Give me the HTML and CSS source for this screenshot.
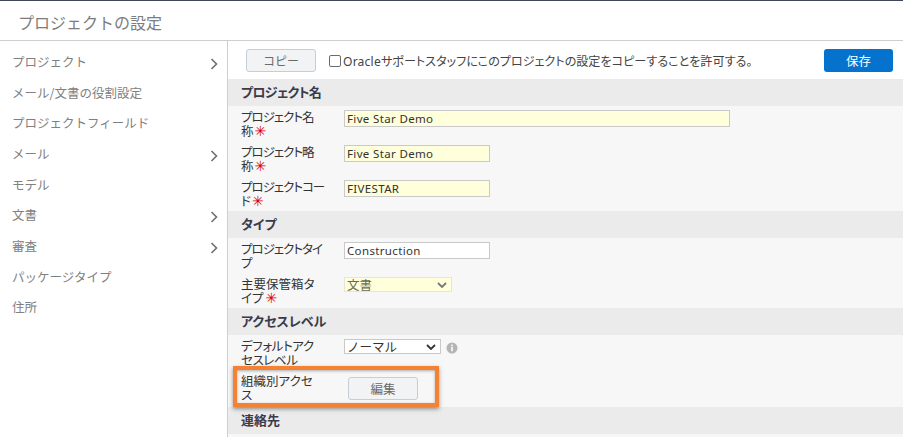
FILE: index.html
```html
<!DOCTYPE html>
<html lang="ja">
<head>
<meta charset="utf-8">
<title>プロジェクトの設定</title>
<link rel="stylesheet" href="styles.css">
</head>
<body>
<div class="page">
  <header class="title">プロジェクトの設定</header>
  <div class="columns">
    <nav class="side">
      <a class="nav-item">プロジェクト<svg class="chev" viewBox="0 0 8 12"><path d="M1.5 1l5 5-5 5"/></svg></a>
      <a class="nav-item">メール/文書の役割設定</a>
      <a class="nav-item">プロジェクトフィールド</a>
      <a class="nav-item">メール<svg class="chev" viewBox="0 0 8 12"><path d="M1.5 1l5 5-5 5"/></svg></a>
      <a class="nav-item">モデル</a>
      <a class="nav-item">文書<svg class="chev" viewBox="0 0 8 12"><path d="M1.5 1l5 5-5 5"/></svg></a>
      <a class="nav-item">審査<svg class="chev" viewBox="0 0 8 12"><path d="M1.5 1l5 5-5 5"/></svg></a>
      <a class="nav-item">パッケージタイプ</a>
      <a class="nav-item">住所</a>
    </nav>
    <main class="main">
      <div class="toolbar">
        <button class="btn btn-copy">コピー</button>
        <span class="box"></span>
        <span class="allow"><span class="latin">Oracle</span>サポートスタッフにこのプロジェクトの設定をコピーすることを許可する。</span>
        <button class="btn-save">保存</button>
      </div>

      <h2 class="sec sec-tight">プロジェクト名</h2>
      <div class="rows">
        <div class="row r35">
          <div class="lbl tight">プロジェクト名<br>称<span class="req">✳</span></div>
          <div class="field long req-bg">Five Star Demo</div>
        </div>
        <div class="row r35">
          <div class="lbl tight">プロジェクト略<br>称<span class="req">✳</span></div>
          <div class="field req-bg">Five Star Demo</div>
        </div>
        <div class="row r35">
          <div class="lbl tight">プロジェクトコー<br>ド<span class="req">✳</span></div>
          <div class="field req-bg">FIVESTAR</div>
        </div>
      </div>

      <h2 class="sec">タイプ</h2>
      <div class="rows">
        <div class="row r35">
          <div class="lbl tight">プロジェクトタイ<br>プ</div>
          <div class="field white">Construction</div>
        </div>
        <div class="row r35">
          <div class="lbl">主要保管箱タ<br>イプ<span class="req">✳</span></div>
          <div class="sel sel-req">文書<svg class="caret light" viewBox="0 0 10 6"><path d="M1 1l4 4 4-4"/></svg></div>
        </div>
      </div>

      <h2 class="sec">アクセスレベル</h2>
      <div class="rows">
        <div class="row r31">
          <div class="lbl snug">デフォルトアク<br>セスレベル</div>
          <div class="sel sel-white">ノーマル<svg class="caret" viewBox="0 0 10 6"><path d="M1 1l4 4 4-4"/></svg></div>
          <svg class="info" viewBox="0 0 12 12"><circle cx="6" cy="6" r="5.5"/><rect x="5.2" y="5" width="1.6" height="4.2"/><rect x="5.2" y="2.6" width="1.6" height="1.6"/></svg>
        </div>
        <div class="row r41">
          <div class="lbl">組織別アクセ<br>ス</div>
          <button class="btn btn-edit">編集</button>
          <div class="callout"></div>
        </div>
      </div>

      <h2 class="sec">連絡先</h2>
      <div class="rows rest"></div>
    </main>
  </div>
</div>
</body>
</html>
```
FILE: styles.css
```css
* { box-sizing: border-box; }
html, body { margin: 0; height: 100%; }
body {
  font-family: "Noto Sans CJK JP", "Noto Sans", sans-serif;
  background: #fff;
  overflow: hidden;
}
.page {
  width: 903px;
  height: 437px;
  display: flex;
  flex-direction: column;
  border-top: 1px solid #3d4757;
  overflow: hidden;
}
.title {
  height: 40px;
  padding-left: 18px;
  font-size: 16px;
  line-height: 42px;
  color: #7d7d7d;
  border-bottom: 1px solid #cfcfcf;
  flex: none;
}
.columns { display: flex; flex: 1; min-height: 0; }
.side {
  width: 228px;
  flex: none;
  padding-top: 5px;
  border-right: 1px solid #cfcfcf;
  display: grid;
  grid-auto-rows: 30.7px;
  align-content: start;
}
.nav-item {
  display: flex;
  align-items: center;
  justify-content: space-between;
  padding: 0 9px 0 12px;
  font-size: 12.5px;
  color: #808080;
}
.chev { width: 8px; height: 12px; margin-top: 5px; }
.chev path { fill: none; stroke: #6f6f6f; stroke-width: 1.6; }
.main { flex: 1; min-width: 0; }
.toolbar {
  height: 38px;
  display: flex;
  align-items: center;
  padding: 1px 10px 0 18px;
}
.btn {
  font-family: inherit;
  font-size: 12px;
  color: #6a6a6a;
  background: #f2f3f5;
  border: 1px solid #c4cdd8;
  border-radius: 3px;
  padding: 0;
  width: 70px;
  height: 23px;
  line-height: 19px;
}
.btn-copy { margin-right: 13px; }
.box {
  width: 12px;
  height: 12px;
  border: 1px solid #6b6b6b;
  border-radius: 2px;
  background: #fff;
  margin-right: 2px;
  flex: none;
}
.allow {
  font-size: 12.1px;
  font-feature-settings: "palt";
  color: #444;
  white-space: nowrap;
  flex: 1;
}
.latin { font-family: "Noto Sans", sans-serif; letter-spacing: 0.2px; }
.btn-save {
  font-family: inherit;
  font-size: 12.5px;
  width: 69px;
  height: 23px;
  padding: 0;
  border: 0;
  border-radius: 3px;
  background: #0572ce;
  color: #fff;
  flex: none;
}
.sec {
  margin: 0;
  height: 27px;
  padding-left: 13px;
  font-size: 13px;
  font-weight: 700;
  font-feature-settings: "palt";
  line-height: 25px;
  color: #3a3a4a;
  background: #ebebeb;
}
.sec-tight { letter-spacing: -0.7px; }
.rows { background: #f7f7f7; }
.row {
  position: relative;
  display: flex;
  align-items: flex-start;
  padding-left: 13px;
}
.r35 { height: 35px; padding-top: 4px; }
.r31 { height: 31px; padding-top: 4px; }
.r41 { height: 41px; padding-top: 8px; }
.lbl {
  width: 103px;
  flex: none;
  font-size: 12.5px;
  font-feature-settings: "palt";
  line-height: 14px;
  color: #333;
  white-space: nowrap;
}
.tight { letter-spacing: -1px; }
.snug { letter-spacing: -0.4px; }
.req {
  font-family: "DejaVu Sans", sans-serif;
  color: #d90000;
  font-size: 14px;
  line-height: 10px;
  margin-left: 2px;
  letter-spacing: 0;
}
.field {
  width: 146px;
  height: 17px;
  border: 1px solid #c9c9c9;
  padding-left: 2px;
  font-family: "Noto Sans", sans-serif;
  font-size: 11.5px;
  letter-spacing: 0.35px;
  line-height: 16px;
  color: #333;
}
.long { width: 386px; }
.req-bg { background: #ffffdc; }
.white { background: #fff; }
.sel {
  display: flex;
  align-items: center;
  justify-content: space-between;
  height: 15px;
  padding: 0 4px 0 2px;
  font-size: 12.5px;
  border: 1px solid #c9c9c9;
  color: #555;
}
.sel-req { width: 108px; background: #ffffdc; border-color: #e6e6d4; color: #6a6a50; }
.sel-white { width: 97px; background: #fff; color: #333; }
.caret { width: 10px; height: 6px; }
.caret path { fill: none; stroke: #333; stroke-width: 1.8; }
.caret.light path { stroke: #777; }
.info { width: 12px; height: 12px; margin: 3px 0 0 5px; }
.info circle { fill: #b5b5b5; }
.info rect { fill: #fff; }
.btn-edit { width: 70px; margin-left: 4px; margin-top: 3px; font-size: 12.5px; }
.callout {
  position: absolute;
  left: 5px;
  top: 0;
  width: 206px;
  height: 41px;
  border: 4px solid #f58232;
  box-shadow: 0 2px 4px rgba(60, 60, 60, 0.55), inset 0 1px 3px rgba(60, 60, 60, 0.4);
  pointer-events: none;
}
.rest { height: 30px; }
```
